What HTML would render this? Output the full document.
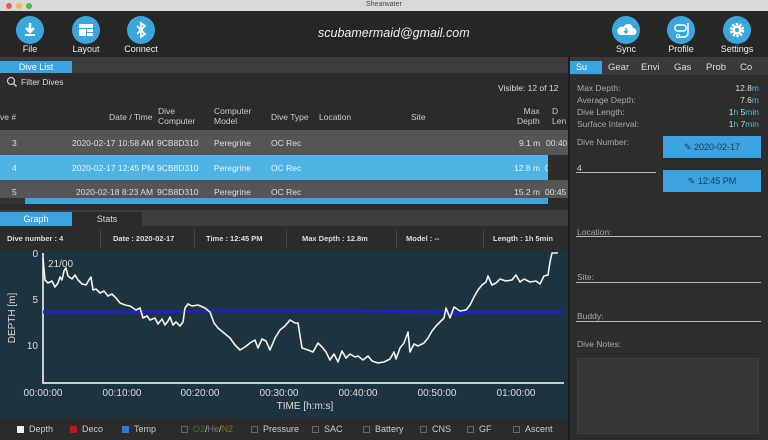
<!DOCTYPE html>
<html><head><meta charset="utf-8"><style>
*{margin:0;padding:0;box-sizing:border-box}
body{width:768px;height:440px;overflow:hidden;background:#262626;font-family:"Liberation Sans",sans-serif;color:#ddd;position:relative;font-size:8px}
.a{position:absolute;white-space:nowrap}
.ic{position:absolute;width:28px;height:28px;border-radius:50%;background:#3aa6dc}
.lbl{position:absolute;font-size:9px;color:#eee;transform:translateX(-50%)}
.hd{color:#ccc;font-size:8.5px}
.rw{position:absolute;left:0;width:568px;height:25px;overflow:hidden}
.rw span{position:absolute;top:8px;font-size:8.5px}
.rl{color:#aaa;font-size:8.5px}
.cy{color:#3ec7d0}
.ln{position:absolute;height:1px;background:#bbb}
.cb{display:inline-block;width:7px;height:7px;border:1px solid #666;vertical-align:-1px;margin-right:5px}
.lg{position:absolute;top:424px;font-size:9px;color:#ccc}
</style></head><body>
<div class="a" style="left:0;top:0;width:768px;height:11px;background:#d9d9d9"></div>
<div class="a" style="left:6px;top:3px;width:6px;height:6px;border-radius:50%;background:#ee5a52"></div>
<div class="a" style="left:16px;top:3px;width:6px;height:6px;border-radius:50%;background:#f4bd3a"></div>
<div class="a" style="left:26px;top:3px;width:6px;height:6px;border-radius:50%;background:#3dc14a"></div>
<div class="a" style="left:366px;top:1px;font-size:7px;color:#444">Shearwater</div>

<div class="ic" style="left:16px;top:16px"><svg width="28" height="28"><path d="M14 7v9M10 12l4 4 4-4" stroke="#fff" stroke-width="2.5" fill="none"/><rect x="9" y="18" width="10" height="2" fill="#fff"/></svg></div>
<div class="ic" style="left:72px;top:16px"><svg width="28" height="28"><rect x="7" y="8" width="14" height="4" fill="#fff"/><rect x="7" y="13" width="7" height="7" fill="#fff"/><rect x="15" y="13" width="6" height="3" fill="#fff"/><rect x="15" y="17" width="6" height="3" fill="#fff"/></svg></div>
<div class="ic" style="left:127px;top:16px"><svg width="28" height="28"><path d="M10 10l8 8-4 3V7l4 3-8 8" stroke="#fff" stroke-width="1.8" fill="none"/></svg></div>
<div class="lbl" style="left:30px;top:44px">File</div>
<div class="lbl" style="left:86px;top:44px">Layout</div>
<div class="lbl" style="left:141px;top:44px">Connect</div>
<div class="a" style="left:318px;top:26px;font-size:12.5px;font-style:italic;color:#eee">scubamermaid@gmail.com</div>
<div class="ic" style="left:612px;top:16px"><svg width="28" height="28"><path d="M8 19h13a3.5 3.5 0 0 0 0-7 5 5 0 0 0-9.5-1A4 4 0 0 0 8 19z" fill="#fff"/><path d="M14 12v5M12 15l2 2 2-2" stroke="#3aa6dc" stroke-width="1.5" fill="none"/></svg></div>
<div class="ic" style="left:667px;top:16px"><svg width="28" height="28"><rect x="8" y="9" width="11" height="6" rx="2.5" stroke="#fff" stroke-width="1.5" fill="none"/><path d="M21 7v10a4 4 0 0 1-4 4h-5" stroke="#fff" stroke-width="1.5" fill="none"/><circle cx="11" cy="20" r="1.5" stroke="#fff" fill="none"/></svg></div>
<div class="ic" style="left:723px;top:16px"><svg width="28" height="28"><circle cx="14" cy="14" r="5.5" stroke="#fff" stroke-width="3.5" fill="none" stroke-dasharray="2.2 1.3"/><circle cx="14" cy="14" r="4.5" fill="#fff"/><circle cx="14" cy="14" r="2" fill="#3aa6dc"/></svg></div>
<div class="lbl" style="left:626px;top:44px">Sync</div>
<div class="lbl" style="left:681px;top:44px">Profile</div>
<div class="lbl" style="left:737px;top:44px">Settings</div>

<div class="a" style="left:0;top:57px;width:568px;height:16px;background:#3c3c3c"></div>
<div class="a" style="left:0;top:61px;width:72px;height:12px;background:#3ba3e0;color:#fff;font-size:9px;text-align:center;line-height:12px">Dive List</div>
<div class="a" style="left:0;top:73px;width:568px;height:137px;background:#2b2b2b"></div>
<svg class="a" style="left:6px;top:76px" width="12" height="12"><circle cx="5" cy="5" r="3.5" stroke="#ccc" stroke-width="1.3" fill="none"/><path d="M7.5 7.5l3 3" stroke="#ccc" stroke-width="1.5"/></svg>
<div class="a" style="left:21px;top:77px;font-size:8.5px;color:#ddd">Filter Dives</div>
<div class="a" style="left:498px;top:83px;font-size:8.5px;color:#ddd">Visible: 12 of 12</div>
<div class="a hd" style="left:0;top:112px">ve #</div>
<div class="a hd" style="left:109px;top:112px">Date / Time</div>
<div class="a hd" style="left:158px;top:106px;line-height:10px">Dive<br>Computer</div>
<div class="a hd" style="left:214px;top:106px;line-height:10px">Computer<br>Model</div>
<div class="a hd" style="left:271px;top:112px">Dive Type</div>
<div class="a hd" style="left:319px;top:112px">Location</div>
<div class="a hd" style="left:411px;top:112px">Site</div>
<div class="a hd" style="left:517px;top:106px;line-height:10px;text-align:right">Max<br>Depth</div>
<div class="a hd" style="left:552px;top:106px;line-height:10px">D<br>Len</div>
<div class="rw" style="top:130px;background:#555;color:#ddd"><span style="left:12px">3</span><span style="left:72px">2020-02-17 10:58 AM</span><span style="left:157px">9CB8D310</span><span style="left:214px">Peregrine</span><span style="left:271px">OC Rec</span><span style="left:519px">9.1 m</span><span style="left:546px">00:40</span></div>
<div class="rw" style="top:155px;width:548px;background:#4fb3e3;color:#e8f6fd"><span style="left:12px">4</span><span style="left:72px">2020-02-17 12:45 PM</span><span style="left:157px">9CB8D310</span><span style="left:214px">Peregrine</span><span style="left:271px">OC Rec</span><span style="left:514px">12.8 m</span><span style="left:545px">01:0</span></div>
<div class="rw" style="top:180px;height:18px;background:#555;color:#ddd"><span style="left:12px;top:7px">5</span><span style="left:76px;top:7px">2020-02-18 8:23 AM</span><span style="left:157px;top:7px">9CB8D310</span><span style="left:214px;top:7px">Peregrine</span><span style="left:271px;top:7px">OC Rec</span><span style="left:514px;top:7px">15.2 m</span><span style="left:545px;top:7px">00:45</span></div>
<div class="a" style="left:0;top:198px;width:548px;height:6px;background:#333"></div>
<div class="a" style="left:25px;top:198px;width:523px;height:6px;background:#3ba3e0"></div>

<div class="a" style="left:0;top:210px;width:568px;height:16px;background:#3c3c3c"></div>
<div class="a" style="left:0;top:212px;width:72px;height:14px;background:#3ba3e0;color:#fff;font-size:9px;text-align:center;line-height:14px">Graph</div>
<div class="a" style="left:72px;top:212px;width:70px;height:14px;background:#2a2a2a;color:#ddd;font-size:9px;text-align:center;line-height:14px">Stats</div>
<div class="a" style="left:0;top:226px;width:568px;height:24px;background:#2b2b2b"></div>
<div class="a" style="left:7px;top:234px;font-weight:bold;font-size:7.5px">Dive number : 4</div>
<div class="a" style="left:113px;top:234px;font-weight:bold;font-size:7.5px">Date : 2020-02-17</div>
<div class="a" style="left:206px;top:234px;font-weight:bold;font-size:7.5px">Time : 12:45 PM</div>
<div class="a" style="left:302px;top:234px;font-weight:bold;font-size:7.5px">Max Depth : 12.8m</div>
<div class="a" style="left:406px;top:234px;font-weight:bold;font-size:7.5px">Model : --</div>
<div class="a" style="left:493px;top:234px;font-weight:bold;font-size:7.5px">Length : 1h 5min</div>
<div class="a" style="left:100px;top:229px;width:1px;height:19px;background:#444"></div>
<div class="a" style="left:194px;top:229px;width:1px;height:19px;background:#444"></div>
<div class="a" style="left:286px;top:229px;width:1px;height:19px;background:#444"></div>
<div class="a" style="left:396px;top:229px;width:1px;height:19px;background:#444"></div>
<div class="a" style="left:483px;top:229px;width:1px;height:19px;background:#444"></div>
<svg class="a" style="left:0;top:250px" width="568" height="168">
<rect width="568" height="168" fill="#1d3340"/>
<g transform="translate(0,-250)">
<path d="M43 253V383H564" stroke="#fff" stroke-width="1.5" fill="none"/>
<path d="M43 312H180L200 311H360L440 312L455 314L470 312H564" stroke="#2020c8" stroke-width="3" fill="none"/>
<path d="M43 258L45 280L48 283L52 281L55 287L58 283L60 277L62 280L64 271L66 268L68 276L72 279L75 275L78 280L82 284L86 285L89 280L91 277L93 290L96 289L100 293L104 291L108 296L112 294L116 298L120 303L125 305L130 306L136 310L140 308L143 318L147 316L150 320L155 318L158 324L162 319L165 325L168 321L170 317L173 325L176 322L180 326L183 322L185 308L188 304L192 306L198 305L205 308L210 312L214 323L218 328L224 333L230 338L235 345L240 350L245 347L250 343L255 340L258 348L262 339L266 341L270 350L275 338L280 330L285 326L290 320L295 323L298 323L302 348L308 350L313 352L318 343L322 347L326 352L330 360L334 354L338 362L342 351L346 358L350 354L355 357L358 356L363 360L368 356L372 361L378 363L384 362L390 359L394 352L396 359L400 348L404 343L408 332L410 352L414 344L418 346L424 343L428 338L432 331L436 326L440 322L444 318L446 308L450 318L454 307L460 311L466 310L470 305L474 297L478 290L482 285L486 282L488 276L492 285L496 283L500 279L506 281L512 280L516 275L520 282L524 279L530 282L536 281L540 284L544 276L548 275L550 262L552 253L558 253" stroke="#f4f4ee" stroke-width="1.6" fill="none" stroke-linejoin="round"/>
<text x="48" y="267" fill="#ddd" font-size="10" font-family="Liberation Sans">21/00</text>
<g fill="#ddd" font-size="10" font-family="Liberation Sans" text-anchor="end"><text x="38" y="257">0</text><text x="38" y="303">5</text><text x="38" y="349">10</text></g>
<g fill="#ddd" font-size="10" font-family="Liberation Sans" text-anchor="middle"><text x="43" y="396">00:00:00</text><text x="122" y="396">00:10:00</text><text x="200" y="396">00:20:00</text><text x="279" y="396">00:30:00</text><text x="358" y="396">00:40:00</text><text x="437" y="396">00:50:00</text><text x="516" y="396">01:00:00</text><text x="305" y="409">TIME [h:m:s]</text></g>
<text transform="translate(15,318) rotate(-90)" fill="#ddd" font-size="10" font-family="Liberation Sans" text-anchor="middle">DEPTH [m]</text>
</g></svg>
<div class="a" style="left:0;top:418px;width:568px;height:22px;background:#2b2b2b"></div>
<div class="lg" style="left:17px"><span class="cb" style="background:#eee;border-color:#eee"></span>Depth</div>
<div class="lg" style="left:70px"><span class="cb" style="background:#c0141c;border-color:#c0141c"></span>Deco</div>
<div class="lg" style="left:122px"><span class="cb" style="background:#2f7bd4;border-color:#2f7bd4"></span>Temp</div>
<div class="lg" style="left:181px"><span class="cb"></span><span style="color:#3a7a30">O2</span>/<span style="color:#777">He</span>/<span style="color:#8a6a20">N2</span></div>
<div class="lg" style="left:251px"><span class="cb"></span>Pressure</div>
<div class="lg" style="left:312px"><span class="cb"></span>SAC</div>
<div class="lg" style="left:363px"><span class="cb"></span>Battery</div>
<div class="lg" style="left:420px"><span class="cb"></span>CNS</div>
<div class="lg" style="left:467px"><span class="cb"></span>GF</div>
<div class="lg" style="left:513px"><span class="cb"></span>Ascent</div>
<div class="a" style="left:568px;top:57px;width:2px;height:383px;background:#1e1e1e"></div>

<div class="a" style="left:570px;top:57px;width:198px;height:383px;background:#2d2d2d"></div>
<div class="a" style="left:570px;top:57px;width:198px;height:18px;background:#3a3a3a"></div>
<div class="a" style="left:570px;top:61px;width:32px;height:13px;background:#3ba3e0;color:#fff;font-size:9px;line-height:13px;padding-left:6px">Su</div>
<div class="a" style="left:608px;top:62px;font-size:9.5px;color:#ddd">Gear</div>
<div class="a" style="left:641px;top:62px;font-size:9.5px;color:#ddd">Envi</div>
<div class="a" style="left:674px;top:62px;font-size:9.5px;color:#ddd">Gas</div>
<div class="a" style="left:706px;top:62px;font-size:9.5px;color:#ddd">Prob</div>
<div class="a" style="left:740px;top:62px;font-size:9.5px;color:#ddd">Co</div>
<div class="a rl" style="left:577px;top:83px">Max Depth:</div>
<div class="a rl" style="left:577px;top:95px">Average Depth:</div>
<div class="a rl" style="left:577px;top:107px">Dive Length:</div>
<div class="a rl" style="left:577px;top:119px">Surface Interval:</div>
<div class="a" style="right:9px;top:83px;color:#ddd;font-size:8.5px">12.8<span class="cy">m</span></div>
<div class="a" style="right:9px;top:95px;color:#ddd;font-size:8.5px">7.6<span class="cy">m</span></div>
<div class="a" style="right:9px;top:107px;color:#ddd;font-size:8.5px">1<span class="cy">h</span> 5<span class="cy">min</span></div>
<div class="a" style="right:9px;top:119px;color:#ddd;font-size:8.5px">1<span class="cy">h</span> 7<span class="cy">min</span></div>
<div class="a rl" style="left:577px;top:137px">Dive Number:</div>
<div class="a" style="left:577px;top:163px;color:#ddd;font-size:8.5px">4</div>
<div class="ln" style="left:576px;top:172px;width:80px"></div>
<div class="a" style="left:663px;top:136px;width:98px;height:22px;background:#3ba3e0;color:#1c3b50;font-size:9px;text-align:center;line-height:22px">✎ 2020-02-17</div>
<div class="a" style="left:663px;top:170px;width:98px;height:22px;background:#3ba3e0;color:#1c3b50;font-size:9px;text-align:center;line-height:22px">✎ 12:45 PM</div>
<div class="a rl" style="left:577px;top:227px">Location:</div>
<div class="ln" style="left:576px;top:236px;width:185px"></div>
<div class="a rl" style="left:577px;top:272px">Site:</div>
<div class="ln" style="left:576px;top:282px;width:185px"></div>
<div class="a rl" style="left:577px;top:311px">Buddy:</div>
<div class="ln" style="left:576px;top:321px;width:185px"></div>
<div class="a rl" style="left:577px;top:339px">Dive Notes:</div>
<div class="a" style="left:577px;top:358px;width:182px;height:76px;background:#363636;border:1px solid #3e3e3e"></div>
</body></html>
